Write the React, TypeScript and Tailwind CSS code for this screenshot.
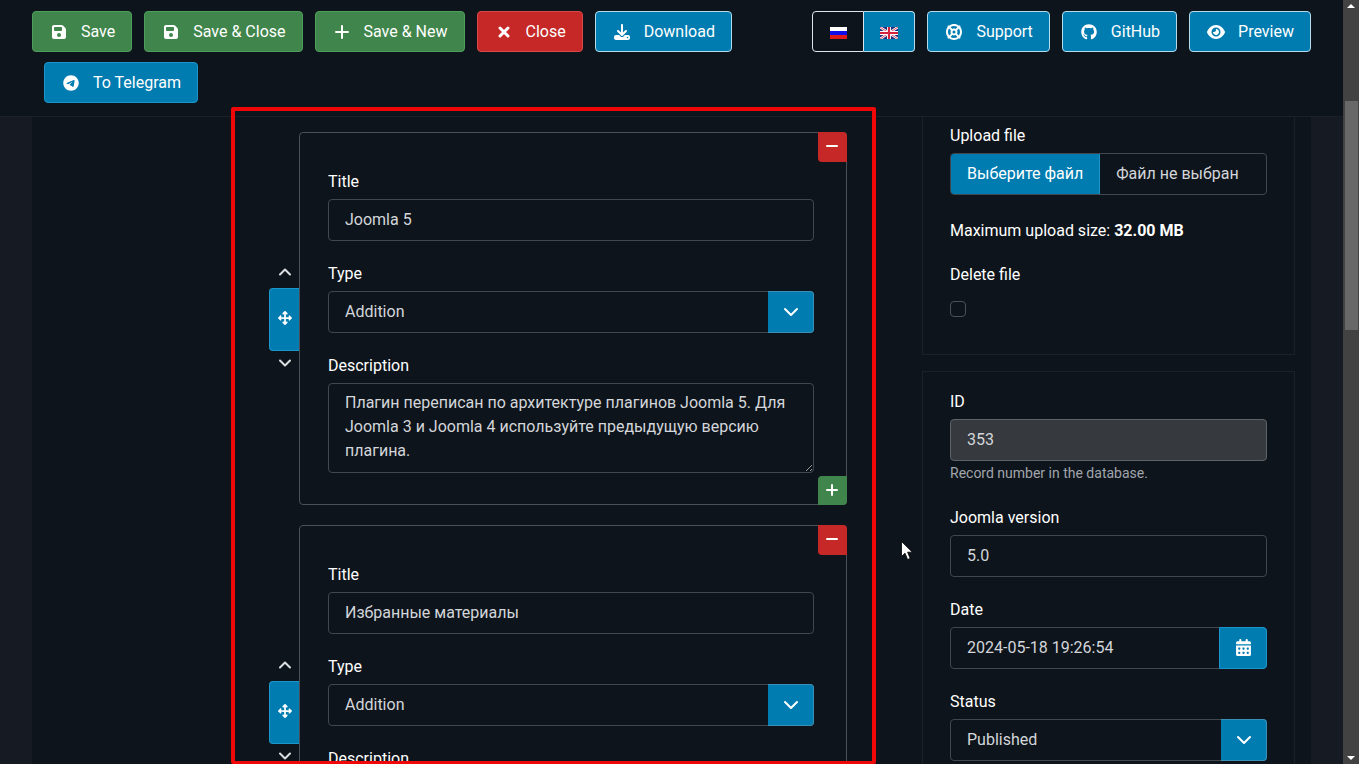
import { useState } from "react"
import type { ReactNode } from "react"
import {
    FaArrowsUpDownLeftRight,
    FaCalendarDays,
    FaDownload,
    FaEye,
    FaFloppyDisk,
    FaGithub,
    FaLifeRing,
    FaTelegram,
} from "react-icons/fa6"

const TONES = {
    success: 'bg-[#40854b] border-[#4f9f5c]',
    danger: 'bg-[#c52827] border-[#d64a49]',
    primary: 'bg-[#007cb0] border-[#1a96cc]',
    outline: 'bg-[#007cb0] border-[#b5dcec]',
}

const FIELD = 'block w-full h-[42px] rounded border border-[#42474e] bg-transparent px-4 text-base text-[#d3d6da] focus:outline-none'

interface Item {
    id: number
    title: string
    type: string
    description: string
}

const ITEMS: Item[] = [
    {
        id: 1,
        title: 'Joomla 5',
        type: 'Addition',
        description: 'Плагин переписан по архитектуре плагинов Joomla 5. Для Joomla 3 и Joomla 4 используйте предыдущую версию плагина.',
    },
    { id: 2, title: 'Избранные материалы', type: 'Addition', description: '' },
]

function ToolButton({ tone, icon, children, className = '' }: {
    tone: keyof typeof TONES
    icon: ReactNode
    children: ReactNode
    className?: string
}) {
    return (
        <button
            type="button"
            className={`flex h-[41px] items-center gap-3 rounded border px-4 text-base text-white cursor-pointer ${TONES[tone]} ${className}`}
        >
            <span className="flex w-5 justify-center">{icon}</span>
            {children}
        </button>
    )
}

function Field({ id, label, children }: { id: string; label: string; children: ReactNode }) {
    return (
        <div>
            <label htmlFor={id} className="mb-[5px] block w-fit text-base leading-6 text-white">{label}</label>
            {children}
        </div>
    )
}

function Stroke({ d, size, width = 2 }: { d: string; size: number; width?: number }) {
    return (
        <svg width={size} height={size} viewBox={`0 0 ${size} ${size}`} fill="none" stroke="currentColor" strokeWidth={width} strokeLinecap="round">
            <path d={d} />
        </svg>
    )
}

function Chevron({ up = false }: { up?: boolean }) {
    return (
        <svg width="12" height="8" viewBox="0 0 12 8" fill="none" stroke="currentColor" strokeWidth="2" strokeLinecap="round" strokeLinejoin="round">
            <path d={up ? 'M1 6.5L6 1.5L11 6.5' : 'M1 1.5L6 6.5L11 1.5'} />
        </svg>
    )
}

function Select({ id, options }: { id: string; options: string[] }) {
    return (
        <div className="relative">
            <select id={id} className={`${FIELD} appearance-none pr-14`}>
                {options.map(o => <option key={o}>{o}</option>)}
            </select>
            <span className="pointer-events-none absolute inset-y-0 right-0 flex w-[46px] items-center justify-center rounded-r border border-l-0 border-[#3a91b8] bg-[#007cb0] text-white">
                <svg width="16" height="16" viewBox="0 0 16 16" fill="none" stroke="currentColor" strokeWidth="2" strokeLinecap="round" strokeLinejoin="round">
                    <path d="M2 5l6 6 6-6" />
                </svg>
            </span>
        </div>
    )
}

function FlagRu() {
    return (
        <svg width="17" height="12" viewBox="0 0 17 12">
            <rect width="17" height="4" fill="#fff" />
            <rect y="4" width="17" height="4" fill="#0d0de8" />
            <rect y="8" width="17" height="4" fill="#e01a1a" />
        </svg>
    )
}

function FlagGb() {
    return (
        <svg width="18" height="12" viewBox="0 0 18 12">
            <rect width="18" height="12" fill="#1d2f7d" />
            <path d="M0 0L18 12M18 0L0 12" stroke="#fff" strokeWidth="2.4" />
            <path d="M0 0L18 12M18 0L0 12" stroke="#d4213d" strokeWidth="0.8" />
            <path d="M9 0V12M0 6H18" stroke="#fff" strokeWidth="4" />
            <path d="M9 0V12M0 6H18" stroke="#d4213d" strokeWidth="2.2" />
        </svg>
    )
}

function Toolbar() {
    return (
        <header className="flex shrink-0 flex-wrap gap-x-3 gap-y-2.5 border-b border-[#1b2129] px-8 pt-[11px] pb-[13px]">
            <ToolButton tone="success" icon={<FaFloppyDisk size={16} />}>Save</ToolButton>
            <ToolButton tone="success" icon={<FaFloppyDisk size={16} />}>Save &amp; Close</ToolButton>
            <ToolButton tone="success" icon={<Stroke size={16} d="M8 2V14M2 8H14" />}>Save &amp; New</ToolButton>
            <ToolButton tone="danger" icon={<Stroke size={16} width={3} d="M4 4L12 12M12 4L4 12" />}>Close</ToolButton>
            <ToolButton tone="outline" icon={<FaDownload size={16} />}>Download</ToolButton>
            <div className="ml-auto flex">
                <button type="button" aria-label="Русский" className="flex h-[41px] w-[52px] items-center justify-center rounded-l border border-[#dfe6ea] pt-0.5 cursor-pointer">
                    <FlagRu />
                </button>
                <button type="button" aria-label="English" className="flex h-[41px] w-[51px] items-center justify-center rounded-r border border-l-0 border-[#b5dcec] bg-[#007cb0] pt-0.5 cursor-pointer">
                    <FlagGb />
                </button>
            </div>
            <ToolButton tone="outline" icon={<FaLifeRing size={16} />}>Support</ToolButton>
            <ToolButton tone="outline" icon={<FaGithub size={16} />}>GitHub</ToolButton>
            <ToolButton tone="outline" icon={<FaEye size={18} />}>Preview</ToolButton>
            <ToolButton tone="primary" icon={<FaTelegram size={16} />} className="ml-3">To Telegram</ToolButton>
        </header>
    )
}

function SubformRow({ item }: { item: Item }) {
    return (
        <li className="flex">
            <div className="-mr-px flex w-[31px] shrink-0 flex-col justify-center pt-0.5 text-[#dcdfe2]">
                <button type="button" aria-label="Move up" className="flex h-7 items-start justify-center pt-2 cursor-pointer"><Chevron up /></button>
                <button type="button" aria-label="Move" className="flex h-[63px] items-center justify-center rounded-l border border-r-0 border-[#1a96cc] bg-[#007cb0] pb-1 text-white cursor-move">
                    <FaArrowsUpDownLeftRight size={14} />
                </button>
                <button type="button" aria-label="Move down" className="flex h-7 items-start justify-center pt-2 cursor-pointer"><Chevron /></button>
            </div>
            <div className="relative flex flex-1 flex-col gap-[21px] rounded border border-[#4b5057] pt-[37px] pr-8 pb-[31px] pl-7">
                <button type="button" aria-label="Remove" className="absolute -top-px -right-px flex h-[30px] w-[29px] items-center justify-center rounded-tr rounded-bl bg-[#c52827] pr-px pb-0.5 text-white cursor-pointer">
                    <Stroke size={14} d="M2 7H12" />
                </button>
                <Field id={`title-${item.id}`} label="Title">
                    <input id={`title-${item.id}`} type="text" defaultValue={item.title} className={`${FIELD} pb-0.5`} />
                </Field>
                <Field id={`type-${item.id}`} label="Type">
                    <Select id={`type-${item.id}`} options={[item.type]} />
                </Field>
                <Field id={`description-${item.id}`} label="Description">
                    <textarea
                        id={`description-${item.id}`}
                        defaultValue={item.description}
                        className="block h-[90px] w-full rounded border border-[#42474e] bg-transparent px-4 py-[7px] text-base leading-6 text-[#d3d6da] focus:outline-none [color-scheme:dark]"
                    />
                </Field>
                <button type="button" aria-label="Add" className="absolute -right-px -bottom-px flex h-[29px] w-[29px] items-center justify-center rounded-tl rounded-br bg-[#40854b] pr-px pb-px text-white cursor-pointer">
                    <Stroke size={14} d="M7 2V12M2 7H12" />
                </button>
            </div>
        </li>
    )
}

function Sidebar() {
    const [fileName, setFileName] = useState('Файл не выбран')

    return (
        <aside className="mr-4 flex w-[373px] shrink-0 flex-col gap-4">
            <section className="border border-t-0 border-[#1b2129] px-[27px] pt-[7px] pb-[37px]">
                <Field id="upload" label="Upload file">
                    <input
                        id="upload"
                        type="file"
                        className="sr-only"
                        onChange={e => setFileName(e.target.files?.[0]?.name ?? 'Файл не выбран')}
                    />
                    <label htmlFor="upload" className="flex h-[42px] overflow-hidden rounded border border-[#42474e] text-base cursor-pointer">
                        <span className="flex items-center border-r border-[#1a96cc] bg-[#007cb0] px-4 text-white">Выберите файл</span>
                        <span className="flex items-center px-4 text-[#d3d6da]">{fileName}</span>
                    </label>
                </Field>
                <p className="mt-6 text-base leading-6 text-white">
                    Maximum upload size: <strong className="font-bold">32.00 MB</strong>
                </p>
                <label htmlFor="delete-file" className="mt-5 block w-fit text-base leading-6 text-white">Delete file</label>
                <input
                    id="delete-file"
                    type="checkbox"
                    className="mt-3.5 block h-4 w-4 appearance-none rounded border border-[#4b5057] checked:bg-[#007cb0]"
                />
            </section>

            <section className="flex flex-col gap-[21px] border border-[#1b2129] px-[27px] pt-[18px] pb-8">
                <Field id="record-id" label="ID">
                    <input id="record-id" type="text" readOnly defaultValue="353" className="block h-[42px] w-full rounded border border-[#5d6268] bg-[#363a3f] px-4 pb-0.5 text-base text-[#d3d6da] focus:outline-none" />
                    <p className="my-0.5 text-sm leading-5 text-[#a0a5ab]">Record number in the database.</p>
                </Field>
                <Field id="version" label="Joomla version">
                    <input id="version" type="text" defaultValue="5.0" className={`${FIELD} pb-0.5`} />
                </Field>
                <Field id="date" label="Date">
                    <div className="relative flex">
                        <input id="date" type="text" defaultValue="2024-05-18 19:26:54" className={`${FIELD} pb-0.5`} />
                        <button type="button" aria-label="Open the calendar" className="absolute inset-y-0 right-0 flex w-12 items-center justify-center rounded-r border border-[#1a96cc] bg-[#007cb0] pb-0.5 text-white cursor-pointer">
                            <FaCalendarDays size={17} />
                        </button>
                    </div>
                </Field>
                <Field id="status" label="Status">
                    <Select id="status" options={['Published', 'Unpublished', 'Archived', 'Trashed']} />
                </Field>
            </section>
        </aside>
    )
}

function ScrollBar() {
    return (
        <div className="flex w-4 shrink-0 flex-col items-center justify-between bg-[#424242] py-1">
            <svg width="8" height="4" viewBox="0 0 8 4" fill="#fff"><path d="M0 4L4 0L8 4Z" /></svg>
            <div className="mt-[93px] mb-auto h-[229px] w-[13px] bg-[#686868]" />
            <svg width="8" height="4" viewBox="0 0 8 4" fill="#fff"><path d="M0 0L4 4L8 0Z" /></svg>
        </div>
    )
}

export default function App() {
    return (
        <div className="flex h-screen overflow-hidden bg-[#0e141b] font-[Roboto,sans-serif]">
            <div className="flex min-w-0 flex-1 flex-col">
                <Toolbar />
                <main className="flex min-h-0 flex-1 bg-[#161b23] px-8">
                    <div className="flex min-w-0 flex-1 bg-[#0e141b]">
                        <div className="relative mr-[46px] ml-[199px] min-w-0 flex-1 pt-[15px] pr-[29px] pl-[38px]">
                            <ul className="flex flex-col gap-5">
                                {ITEMS.map(item => <SubformRow key={item.id} item={item} />)}
                            </ul>
                            {/* highlight frame and pointer */}
                            <div className="pointer-events-none absolute inset-x-0 -top-2.5 bottom-0 z-10 rounded-xs border-4 border-b-3 border-[#f00808]" />
                            <svg className="pointer-events-none absolute top-[424px] left-full ml-[25px]" width="13" height="20" viewBox="0 0 13 20" fill="#fff" stroke="#000" strokeWidth="0.8">
                                <path d="M0.5 0.5V15.5L4 12.2L6.6 18.5L9.2 17.4L6.6 11.2H11.4Z" />
                            </svg>
                        </div>
                        <Sidebar />
                    </div>
                </main>
            </div>
            <ScrollBar />
        </div>
    )
}
